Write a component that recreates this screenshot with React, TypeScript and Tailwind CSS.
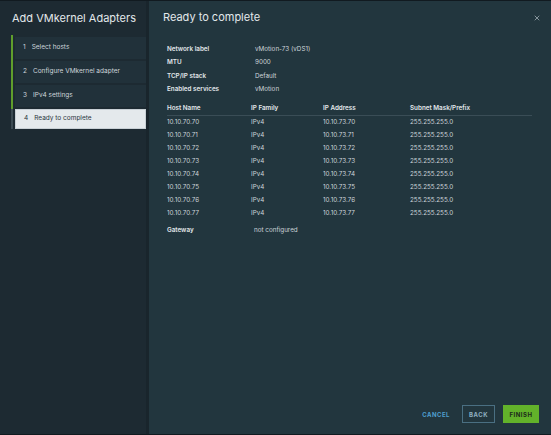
import { X } from "lucide-react";

const steps = [
  { n: 1, label: "Select hosts" },
  { n: 2, label: "Configure VMkernel adapter" },
  { n: 3, label: "IPv4 settings" },
  { n: 4, label: "Ready to complete" },
];

const summary = [
  ["Network label", "vMotion-73 (vDS1)"],
  ["MTU", "9000"],
  ["TCP/IP stack", "Default"],
  ["Enabled services", "vMotion"],
];

const hosts = ["70", "71", "72", "73", "74", "75", "76", "77"];

const App = () => {
  return (
    <div
      className="flex h-[435px] w-[551px] overflow-hidden border-y border-[#111a20] bg-[#22363e] text-[#d6dde1]"
      style={{ fontFamily: "Inter, 'Noto Sans', sans-serif" }}
    >
      {/* Sidebar */}
      <div className="flex w-[149px] shrink-0 flex-col border-r-[3px] border-[#19252c] bg-[#1d2a32]">
        <h1 className="whitespace-nowrap pl-[12px] pt-[9px] text-[11px] leading-[16px] text-[#e3e8eb]">
          Add VMkernel Adapters
        </h1>
        <div className="mt-[9px] flex">
          <div className="ml-[11px] flex w-[2px] flex-col">
            <div className="h-[74px] bg-[#5f9e2c]" />
            <div className="h-[20px] bg-[#3b4a52]" />
          </div>
          <div className="ml-[2px] flex flex-1 flex-col gap-[2px] pt-[2px]">
            {steps.map((s) =>
              s.n === 4 ? (
                <div
                  key={s.n}
                  className="flex h-[20px] items-center gap-[6px] border border-[#c8d0d5] bg-[#e4e9ec] pl-[8px] text-[6.5px] text-[#2a363d]"
                >
                  <span>{s.n}</span>
                  <span>{s.label}</span>
                </div>
              ) : (
                <div
                  key={s.n}
                  className="flex h-[22px] items-center gap-[6px] bg-[#21313a] pl-[8px] text-[6.5px] text-[#cdd5da]"
                >
                  <span>{s.n}</span>
                  <span>{s.label}</span>
                </div>
              )
            )}
          </div>
        </div>
      </div>

      {/* Main */}
      <div className="flex flex-1 flex-col">
        <div className="flex items-start justify-between pl-[14px] pr-[10px] pt-[8px]">
          <h2 className="text-[11px] leading-[16px] text-[#e3e8eb]">Ready to complete</h2>
          <X className="mt-[5px] h-[8px] w-[8px] text-[#9aa7ae]" strokeWidth={2.5} />
        </div>

        <div className="mt-[18px] flex flex-col pl-[18px] pr-[19px] text-[6.3px]">
          {summary.map(([k, v]) => (
            <div key={k} className="flex h-[13.3px] items-center">
              <span className="w-[88px] font-semibold text-[#e1e7ea]">{k}</span>
              <span className="text-[#cdd5da]">{v}</span>
            </div>
          ))}

          <div className="mt-[7px] grid h-[13px] grid-cols-[84px_72px_87px_1fr] items-center border-b border-[#3a4d56] font-semibold text-[#e1e7ea]">
            <span>Host Name</span>
            <span>IP Family</span>
            <span>IP Address</span>
            <span>Subnet Mask/Prefix</span>
          </div>
          {hosts.map((h) => (
            <div
              key={h}
              className="grid h-[13px] grid-cols-[84px_72px_87px_1fr] items-center text-[#cdd5da]"
            >
              <span>10.10.70.{h}</span>
              <span>IPv4</span>
              <span>10.10.73.{h}</span>
              <span>255.255.255.0</span>
            </div>
          ))}

          <div className="mt-[4px] flex h-[13px] items-center">
            <span className="w-[87px] font-semibold text-[#e1e7ea]">Gateway</span>
            <span className="text-[#cdd5da]">not configured</span>
          </div>
        </div>

        <div className="mt-auto flex items-center justify-end gap-[8px] pb-[11px] pr-[12px] text-[6px] font-bold tracking-[0.5px]">
          <button className="px-[4px] text-[#4f9fcf]">CANCEL</button>
          <button className="h-[18px] w-[33px] border border-[#4a6f82] text-[#8fb0c2]">
            BACK
          </button>
          <button className="h-[18px] w-[36px] bg-[#62b22a] text-[#1c2a1a]">FINISH</button>
        </div>
      </div>
    </div>
  );
};

export default App;
